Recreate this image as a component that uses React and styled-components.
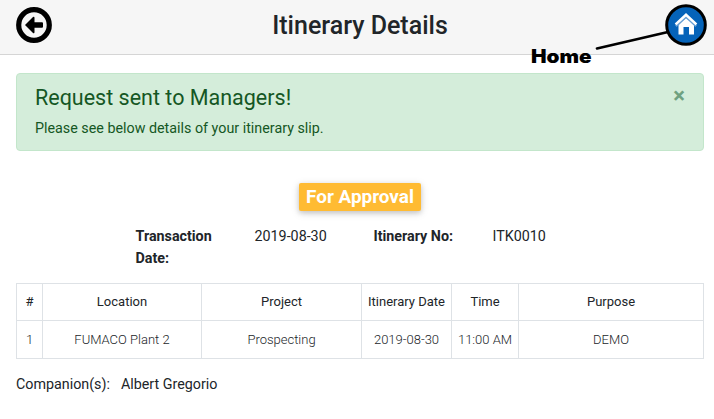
import React from "react";
import styled, { createGlobalStyle } from "styled-components";

const GlobalStyle = createGlobalStyle`
  *, *::before, *::after { box-sizing: border-box; }
  body {
    margin: 0;
    background: #fff;
    color: #212529;
    font-family: Roboto, "Liberation Sans", sans-serif;
    font-size: 14.3px;
    overflow: hidden;
  }
`;

const Page = styled.div`
  position: relative;
  width: 714px;
  height: 419px;
`;

const Header = styled.header`
  display: grid;
  grid-template-columns: 64px 1fr 64px;
  align-items: center;
  height: 55px;
  padding: 0 4px 0 15px;
  background: #f6f6f6;
  border-bottom: 1px solid #d5d5d5;
`;

const Title = styled.h1`
  margin: 0;
  padding: 0 5px 2px 0;
  font-size: 25px;
  font-weight: 500;
  line-height: 32px;
  text-align: center;
`;

const IconButton = styled.button`
  display: block;
  justify-self: ${(p) => p.$side};
  height: 44px;
  margin: 0 0 4px;
  padding: 0;
  border: 0;
  background: none;

  svg { display: block; overflow: visible; }
`;

const Content = styled.main`
  padding: 18px 10px 0 16px;
`;

const Alert = styled.section`
  display: flex;
  justify-content: space-between;
  height: 78px;
  padding: 10px 18px;
  background: #d4edda;
  border: 1px solid #c3e6cb;
  border-radius: 4px;
  color: #155724;
`;

const AlertHeading = styled.h2`
  margin: 0 0 5px;
  font-size: 21.5px;
  font-weight: 400;
  line-height: 28px;
`;

const AlertText = styled.p`
  margin: 0;
  line-height: 22px;
`;

const Close = styled.button`
  align-self: flex-start;
  margin: 0;
  padding: 0;
  border: 0;
  background: none;
  color: #6fa180;
  font: 700 22px/24px Roboto, sans-serif;
`;

const StatusRow = styled.div`
  display: flex;
  justify-content: center;
  padding-top: 32px;
`;

const Badge = styled.span`
  width: 122px;
  height: 28px;
  border-radius: 2px;
  background: #ffbb33;
  box-shadow: 0 2px 5px rgba(0, 0, 0, 0.16), 0 2px 10px rgba(0, 0, 0, 0.12);
  color: #fff;
  font-size: 18.9px;
  font-weight: 700;
  line-height: 27px;
  text-align: center;
`;

const Summary = styled.dl`
  display: grid;
  grid-template-columns: repeat(4, 119px);
  margin: 14px 0 14px 119.5px;
  line-height: 22px;
`;

const Term = styled.dt`
  padding-right: 30px;
  font-weight: 700;
`;

const Value = styled.dd`
  margin: 0;
`;

const Table = styled.table`
  width: 688px;
  table-layout: fixed;
  border-collapse: collapse;
  font-size: 13px;
  text-align: center;
`;

const Column = styled.col`
  width: ${(p) => p.$width}px;
`;

const HeadCell = styled.th`
  height: 37px;
  padding: 0 0 2px;
  border: 1px solid #dee2e6;
  font-weight: 400;
`;

const Cell = styled.td`
  height: 38px;
  padding: 0;
  border: 1px solid #dee2e6;
  font-weight: 300;
`;

const Companions = styled.p`
  display: flex;
  gap: 11px;
  margin: 14px 0 0;
  line-height: 22px;
`;

const Callout = styled.div`
  position: absolute;
  top: 43px;
  left: 531px;
  font: 900 18.5px/26px Inter, sans-serif;
  color: #000;
  transform: scaleX(1.12);
  transform-origin: left;
`;

const Pointer = styled.svg`
  position: absolute;
  top: 28px;
  left: 593px;
`;

const columns = [
  ["#", 26, "1"],
  ["Location", 159, "FUMACO Plant 2"],
  ["Project", 160, "Prospecting"],
  ["Itinerary Date", 90, "2019-08-30"],
  ["Time", 67, "11:00 AM"],
  ["Purpose", 185, "DEMO"],
];

function BackIcon() {
  return (
    <svg width="38" height="44" viewBox="0 0 38 44">
      <circle cx="19" cy="22" r="15.3" fill="#f6f6f6" stroke="#000" strokeWidth="5.2" />
      <path d="M10 22 L18 14 Q19.5 13 19.5 15 V19.3 H27 Q28 19.3 28 20.3 V23.7 Q28 24.7 27 24.7 H19.5 V29 Q19.5 31 18 30 Z" fill="#000" />
    </svg>
  );
}

function HomeIcon() {
  return (
    <svg width="44" height="44" viewBox="0 0 44 44">
      <circle cx="20" cy="22" r="19.3" fill="#0563b9" stroke="#000" strokeWidth="3" />
      <path d="M12.5 22 L20 14.8 L28 22 V31.5 H23 V24 H17.5 V31.5 H12.5 Z" fill="#fff" />
      <path d="M9.8 23 L20 13.6 L30.2 23" fill="none" stroke="#659ed3" strokeWidth="2.4" />
      <path d="M9.6 21.4 L20 11.7 L30.4 21.4" fill="none" stroke="#fff" strokeWidth="2.6" />
    </svg>
  );
}

export default function App() {
  return (
    <Page>
      <GlobalStyle />
      <Header>
        <IconButton $side="start" aria-label="Back"><BackIcon /></IconButton>
        <Title>Itinerary Details</Title>
        <IconButton $side="end" aria-label="Home"><HomeIcon /></IconButton>
      </Header>
      <Content>
        <Alert role="alert">
          <div>
            <AlertHeading>Request sent to Managers!</AlertHeading>
            <AlertText>Please see below details of your itinerary slip.</AlertText>
          </div>
          <Close aria-label="Close">×</Close>
        </Alert>
        <StatusRow><Badge>For Approval</Badge></StatusRow>
        <Summary>
          <Term>Transaction Date:</Term>
          <Value>2019-08-30</Value>
          <Term>Itinerary No:</Term>
          <Value>ITK0010</Value>
        </Summary>
        <Table>
          <colgroup>
            {columns.map(([name, width]) => <Column key={name} $width={width} />)}
          </colgroup>
          <thead>
            <tr>{columns.map(([name]) => <HeadCell key={name}>{name}</HeadCell>)}</tr>
          </thead>
          <tbody>
            <tr>{columns.map(([name, , value]) => <Cell key={name}>{value}</Cell>)}</tr>
          </tbody>
        </Table>
        <Companions>
          <span>Companion(s):</span>
          <span>Albert Gregorio</span>
        </Companions>
      </Content>
      <Callout>Home</Callout>
      <Pointer width="78" height="24" viewBox="0 0 78 24">
        <path d="M4 20.5 L75 4" stroke="#000" strokeWidth="2.7" strokeLinecap="round" />
      </Pointer>
    </Page>
  );
}
